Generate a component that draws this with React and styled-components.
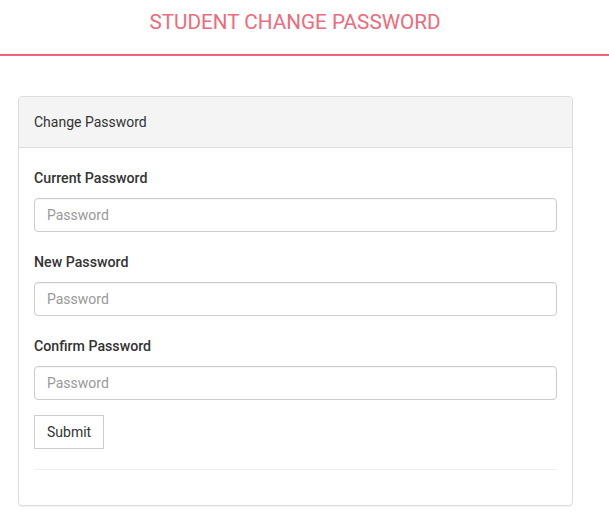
import React from "react";
import styled, { createGlobalStyle } from "styled-components";

const GlobalStyle = createGlobalStyle`
  * { box-sizing: border-box; }
  body {
    margin: 0;
    background: #fff;
    font-family: Roboto, "Liberation Sans", Arial, sans-serif;
    font-size: 14px;
    color: #333;
  }
`;

const fields = [
  { id: "current", label: "Current Password" },
  { id: "new", label: "New Password" },
  { id: "confirm", label: "Confirm Password" },
];

const App = () => {
  return (
    <>
      <GlobalStyle />
      <TopBar>
        <Title>STUDENT CHANGE PASSWORD</Title>
      </TopBar>
      <Page>
        <Panel>
          <PanelHeading>Change Password</PanelHeading>
          <PanelBody>
            <form onSubmit={(e) => e.preventDefault()}>
              {fields.map((f) => (
                <FormGroup key={f.id}>
                  <Label htmlFor={f.id}>{f.label}</Label>
                  <Input id={f.id} type="password" placeholder="Password" />
                </FormGroup>
              ))}
              <SubmitButton type="submit">Submit</SubmitButton>
            </form>
            <Divider />
          </PanelBody>
        </Panel>
      </Page>
    </>
  );
};

const TopBar = styled.div`
  height: 56px;
  padding: 11px 19px 0 0;
  border-bottom: 2px solid #ee6478;
  text-align: center;
`;
const Title = styled.h1`
  margin: 0;
  font-size: 20.7px;
  font-weight: 400;
  line-height: 23px;
  color: #ef6a7c;
`;

const Page = styled.div`
  padding: 40px 36px 20px 18px;
`;

const Panel = styled.div`
  border: 1px solid #ddd;
  border-radius: 4px;
  background: #fff;
  box-shadow: 0 1px 1px rgba(0, 0, 0, 0.05);
`;
const PanelHeading = styled.div`
  padding: 15px;
  line-height: 20px;
  background: #f4f4f4;
  border-bottom: 1px solid #ddd;
  border-radius: 3px 3px 0 0;
  color: #333;
`;
const PanelBody = styled.div`
  padding: 20px 15px 15px;
`;

const FormGroup = styled.div`
  margin-bottom: 20px;

  &:last-of-type {
    margin-bottom: 15px;
  }
`;
const Label = styled.label`
  display: block;
  margin-bottom: 10px;
  line-height: 20px;
  font-size: 14.2px;
  font-weight: 500;
  color: #333;
`;
const Input = styled.input`
  display: block;
  width: 100%;
  height: 34px;
  padding: 6px 12px;
  font-family: inherit;
  font-size: 14px;
  color: #555;
  border: 1px solid #ccc;
  border-radius: 4px;
  box-shadow: inset 0 1px 1px rgba(0, 0, 0, 0.04);

  &::placeholder {
    color: #999;
  }
`;
const SubmitButton = styled.button`
  height: 34px;
  padding: 6px 12px;
  font-family: inherit;
  font-size: 14px;
  color: #333;
  background: #fff;
  border: 1px solid #ccc;
  border-radius: 0;
  cursor: pointer;
`;
const Divider = styled.hr`
  margin: 20px 0;
  border: 0;
  border-top: 1px solid #eee;
`;

export default App;
